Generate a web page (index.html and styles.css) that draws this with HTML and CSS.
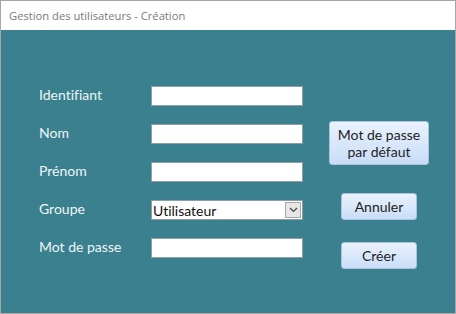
FILE: index.html
```html
<!DOCTYPE html>
<html lang="fr">

<head>
  <meta charset="UTF-8" />
  <meta name="viewport" content="width=device-width, initial-scale=1.0" />
  <title>Gestion des utilisateurs - Création</title>
  <link rel="stylesheet" href="styles.css">
</head>

<body>
  <div class="fenetre">
    <div class="barre-titre">Gestion des utilisateurs - Création</div>

    <div class="contenu">
      <form class="formulaire">
        <label for="identifiant">Identifiant</label>
        <input type="text" id="identifiant">

        <label for="nom">Nom</label>
        <input type="text" id="nom">

        <label for="prenom">Prénom</label>
        <input type="text" id="prenom">

        <label for="groupe">Groupe</label>
        <div class="liste">
          <span class="liste-valeur">Utilisateur</span>
          <span class="liste-fleche">
            <svg width="9" height="6" viewBox="0 0 9 6">
              <path d="M1 1 L4.5 4.5 L8 1" fill="none" stroke="#444" stroke-width="1.2" />
            </svg>
          </span>
        </div>

        <label for="motdepasse">Mot de passe</label>
        <input type="password" id="motdepasse">
      </form>

      <div class="actions">
        <button class="bouton bouton-large">Mot de passe<br>par défaut</button>
        <button class="bouton bouton-annuler">Annuler</button>
        <button class="bouton bouton-creer">Créer</button>
      </div>
    </div>
  </div>
</body>

</html>
```

FILE: styles.css
```css
body,
html {
  margin: 0;
  padding: 0;
  height: 100%;
  overflow: hidden;
  background: #fff;
}

.fenetre {
  width: 456px;
  height: 314px;
  box-sizing: border-box;
  border: 1px solid #a6a6a6;
  display: flex;
  flex-direction: column;
}

.barre-titre {
  height: 29px;
  box-sizing: border-box;
  padding: 7px 0 0 8px;
  font-family: 'Open Sans', sans-serif;
  font-size: 11.2px;
  color: #7a7a7a;
  background: #fff;
}

.contenu {
  flex: 1;
  background-color: #3b808f;
  display: flex;
  align-items: flex-start;
  font-family: 'Lato', sans-serif;
  font-variant-ligatures: none;
}

.formulaire {
  margin: 56px 0 0 38px;
  display: grid;
  grid-template-columns: 112px 152px;
  grid-auto-rows: 20px;
  row-gap: 18px;
  align-items: center;
}

.formulaire label {
  font-size: 14px;
  color: #eef6f7;
  padding-bottom: 3px;
}

.formulaire input {
  height: 20px;
  box-sizing: border-box;
  margin: 0;
  border: 1px solid #8f9ea3;
  background: #fff;
  outline: none;
}

.liste {
  height: 20px;
  box-sizing: border-box;
  border: 1px solid #8f9ea3;
  background: #fff;
  display: flex;
  align-items: center;
}

.liste-valeur {
  flex: 1;
  padding-left: 1px;
  font-size: 14px;
  color: #111;
}

.liste-fleche {
  width: 16px;
  height: 16px;
  margin-right: 1px;
  box-sizing: border-box;
  border: 1px solid #a8a8a8;
  background: #e6e6e6;
  display: flex;
  align-items: center;
  justify-content: center;
}

.actions {
  width: 100px;
  margin: 91px 0 0 26px;
  display: flex;
  flex-direction: column;
  align-items: center;
}

.bouton {
  font-family: 'Lato', sans-serif;
  font-size: 14px;
  color: #222;
  border: 1px solid #aac4de;
  border-radius: 3px;
  background: linear-gradient(to bottom, #eaf2fd, #c9ddf8);
  padding: 0;
  cursor: pointer;
}

.bouton-large {
  width: 100px;
  height: 44px;
  line-height: 17px;
}

.bouton-annuler {
  width: 76px;
  height: 27px;
  margin-top: 28px;
}

.bouton-creer {
  width: 76px;
  height: 27px;
  margin-top: 22px;
}
```
